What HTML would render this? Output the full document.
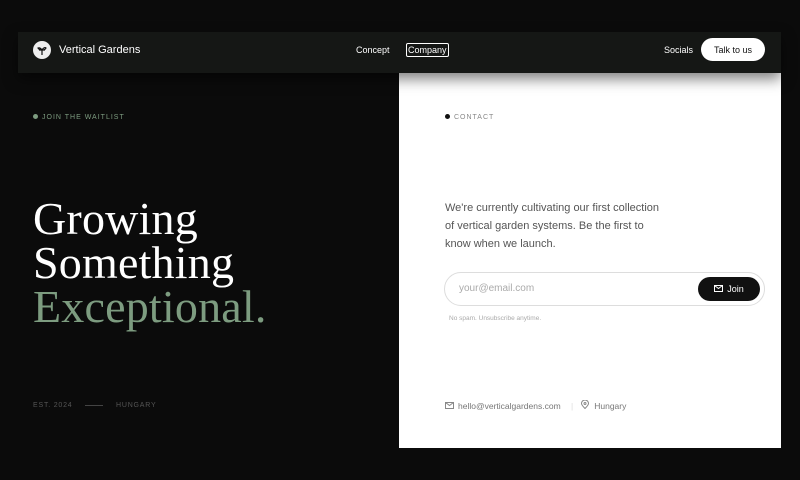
<!DOCTYPE html>
<html><head><style>
*{margin:0;padding:0;box-sizing:border-box}
body{width:800px;height:480px;background:#0b0b0b;font-family:"Liberation Sans",sans-serif;position:relative;overflow:hidden}
.nav{position:absolute;left:18px;top:32px;width:763px;height:41px;background:#151715;box-shadow:0 6px 14px rgba(0,0,0,.5);z-index:2}
.logo{position:absolute;left:15px;top:9px;width:18px;height:18px;border-radius:50%;background:#eee}
.brand{position:absolute;left:41px;top:12px;color:#fff;font-size:11px}
.nl{position:absolute;top:13px;color:#fff;font-size:9px}
.btn{position:absolute;left:683px;top:6px;width:64px;height:23px;border-radius:12px;background:#fff;color:#111;font-size:9px;text-align:center;line-height:24px}
.panel{position:absolute;left:399px;top:73px;width:382px;height:375px;background:#fff}
.lab{position:absolute;font-size:7px;letter-spacing:1px}
h1{position:absolute;left:33px;top:197px;font-family:"Liberation Serif",serif;font-weight:normal;font-size:46px;letter-spacing:.2px;line-height:44px;color:#fff}
.g{color:#7d9c80}
</style></head><body>
<div class="nav">
<div class="logo"><svg width="18" height="18" viewBox="0 0 18 18"><path d="M9 9v5M6 9h6M9 9c-2-3-4-2-4-2s1 2 4 2M9 9c1-2 3-3 4-2-1 2-3 2-4 2" stroke="#111" stroke-width="1.2" fill="none"/></svg></div>
<div class="brand">Vertical Gardens</div>
<div class="nl" style="left:338px">Concept</div>
<div class="nl" style="left:388px;top:11px;border:1px solid #fff;border-radius:2px;padding:1px 1px">Company</div>
<div class="nl" style="left:646px">Socials</div>
<div class="btn">Talk to us</div>
</div>
<div class="lab" style="left:33px;top:114px;color:#7d9c80"><span style="display:inline-block;width:5px;height:5px;border-radius:50%;background:#7d9c80;margin-right:4px"></span>JOIN THE WAITLIST</div>
<h1>Growing<br>Something<br><span class="g">Exceptional.</span></h1>
<div class="lab" style="left:33px;top:402px;color:#555;letter-spacing:.8px">EST. 2024 <span style="display:inline-block;width:18px;height:1px;background:#444;vertical-align:middle;margin:0 10px"></span> HUNGARY</div>
<div class="panel">
<div class="lab" style="left:46px;top:41px;color:#888"><span style="display:inline-block;width:5px;height:5px;border-radius:50%;background:#111;margin-right:4px"></span>CONTACT</div>
<div style="position:absolute;left:46px;top:126px;width:222px;font-size:11px;line-height:18px;color:#555">We're currently cultivating our first collection of vertical garden systems. Be the first to know when we launch.</div>
<div style="position:absolute;left:45px;top:199px;width:321px;height:34px;border:1px solid #ddd;border-radius:17px">
<div style="position:absolute;left:14px;top:10px;font-size:10px;color:#aaa">your@email.com</div>
<div style="position:absolute;right:4px;top:4px;width:62px;height:24px;border-radius:12px;background:#111;color:#fff;font-size:9px;line-height:24px;text-align:center"><svg width="9" height="7" viewBox="0 0 9 7" style="margin-right:4px"><rect x=".5" y=".5" width="8" height="6" fill="none" stroke="#fff"/><path d="M.5 .5l4 3 4-3" fill="none" stroke="#fff"/></svg>Join</div>
</div>
<div style="position:absolute;left:50px;top:242px;font-size:6.5px;color:#aaa">No spam. Unsubscribe anytime.</div>
<div style="position:absolute;left:46px;top:327px;font-size:8.5px;color:#777"><svg width="9" height="7" viewBox="0 0 9 7" style="margin-right:4px"><rect x=".5" y=".5" width="8" height="6" fill="none" stroke="#888"/><path d="M.5 .5l4 3 4-3" fill="none" stroke="#888"/></svg>hello@verticalgardens.com <span style="color:#ddd;margin:0 8px">|</span><svg width="8" height="9" viewBox="0 0 8 9" style="margin-right:5px"><path d="M4 8.5C1 5.5 .5 4.5.5 3.5a3.5 3.5 0 0 1 7 0c0 1-.5 2-3.5 5z" fill="none" stroke="#888"/><circle cx="4" cy="3.5" r="1" fill="none" stroke="#888"/></svg>Hungary</div>
</div>
</body></html>
